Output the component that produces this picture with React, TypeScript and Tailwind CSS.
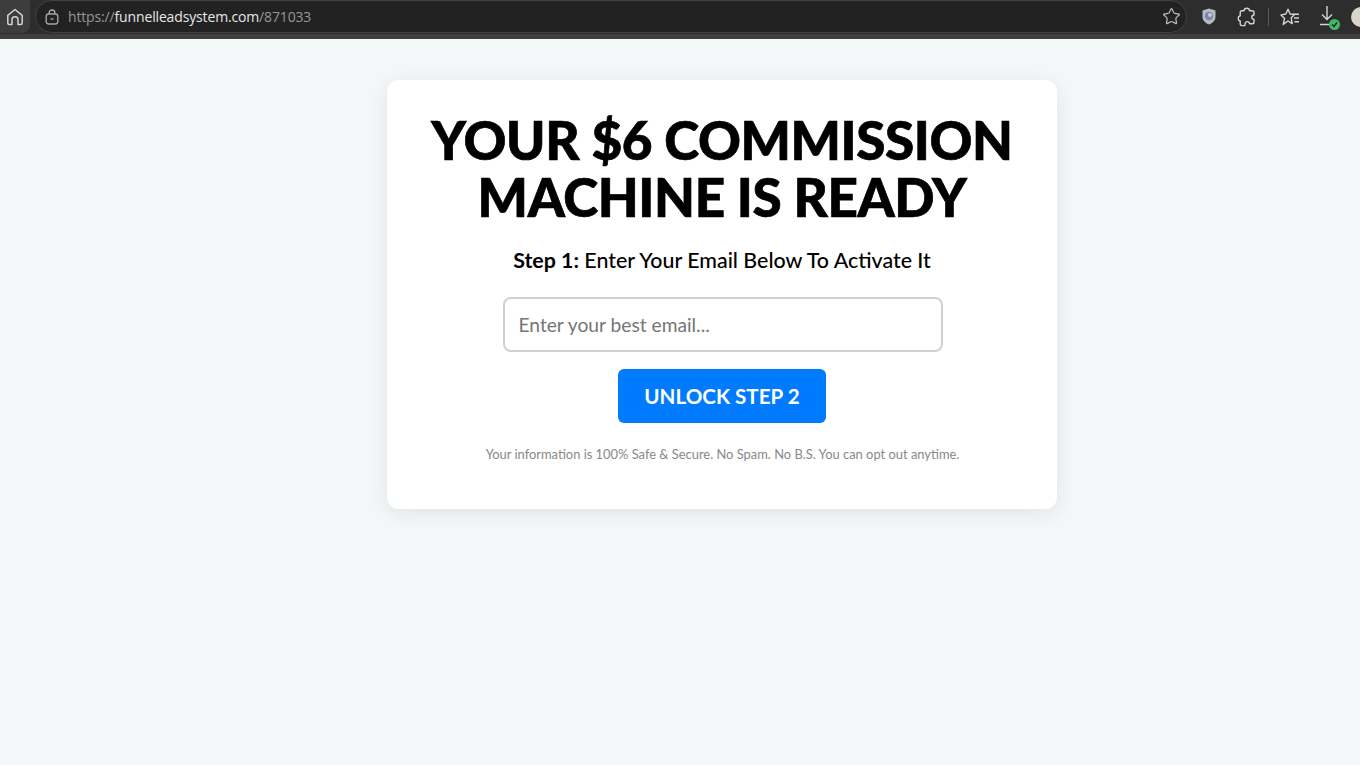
import React from "react";
import { Star } from "lucide-react";

const font = { fontFamily: "Lato, sans-serif" };

function HomeIcon() {
  return (
    <svg width="18" height="18" viewBox="0 0 18 18" fill="none" stroke="#d2d2d2" strokeWidth="1.5" strokeLinejoin="round">
      <path d="M9 1.5 L16.2 7.4 V15 Q16.2 16.5 14.8 16.5 H12 V11.5 Q12 8.8 9 8.8 Q6 8.8 6 11.5 V16.5 H3.2 Q1.8 16.5 1.8 15 V7.4 Z" />
    </svg>
  );
}

function LockIcon() {
  return (
    <svg width="14" height="16" viewBox="0 0 14 16" fill="none" stroke="#a4a4a4" strokeWidth="1.4">
      <rect x="1.2" y="5" width="11.6" height="10" rx="2.4" />
      <path d="M4.2 5 V3.6 Q4.2 1 7 1 Q9.8 1 9.8 3.6 V5" />
      <path d="M5.5 10 H8.5" />
    </svg>
  );
}

function ExtensionIcon() {
  return (
    <svg width="20" height="20" viewBox="0 0 20 20" fill="none" stroke="#d4d4d4" strokeWidth="1.4" strokeLinejoin="round">
      <path d="M7 3.8 Q7.2 1.2 9.8 1.2 Q12.4 1.2 12.6 3.8 H15.2 Q17 3.8 17 5.6 V8 Q14.8 8.2 14.8 10.2 Q14.8 12.2 17 12.4 V15 Q17 16.8 15.2 16.8 H12.6 Q12.4 14.6 10.2 14.6 Q8 14.6 7.8 18.6 H5 Q3.2 18.6 3.2 16.8 V14 Q1.2 13.6 1.2 11.4 Q1.2 9.2 3.2 8.8 V5.6 Q3.2 3.8 5 3.8 Z" />
    </svg>
  );
}

function FavoritesIcon() {
  return (
    <svg width="20" height="18" viewBox="0 0 20 18" fill="none" stroke="#d4d4d4" strokeWidth="1.4" strokeLinejoin="round">
      <path d="M8 1.2 L10.1 6 L14.6 6.5 L11.2 9.8 L12.2 15.6 L8 13 L3.2 16.4 L4.6 10.4 L1 6.9 L5.8 6 Z" />
      <path d="M13.4 6.2 H19 M14 10 H19 M14.4 13.8 H19" />
    </svg>
  );
}

function BrowserBar() {
  return (
    <div className="flex h-[39px] w-full items-start overflow-hidden border-b-[5px] border-b-[#3f3f3f] bg-[#2d2d2d] font-['Open_Sans',sans-serif]">
      <div className="flex h-[33px] w-[30px] shrink-0 items-center justify-center rounded-br-lg bg-[#3d3d3d]">
        <HomeIcon />
      </div>
      <div className="ml-[5px] flex h-[33px] w-[1152px] shrink-0 items-center rounded-full border border-[#424242] bg-[#222222] pl-[9px] pr-[5px]">
        <LockIcon />
        <span className="ml-[9px] text-[14px] tracking-[-0.15px] text-[#969696]">
          https://<span className="text-[#e6e6e6]">funnelleadsystem.com</span>/871033
        </span>
        <Star className="ml-auto size-[19px] text-[#bdbdbd]" strokeWidth={1.5} />
      </div>
      <div className="flex h-[33px] shrink-0 items-center">
        <svg width="14" height="17" viewBox="0 0 14 17" className="ml-[15px]">
          <path d="M7 0.5 L13.5 2.5 V9 C13.5 12.5 10.5 15 7 16.5 C3.5 15 0.5 12.5 0.5 9 V2.5 Z" fill="#b4bac9" />
          <circle cx="7" cy="8" r="4.2" fill="#7b88a3" />
          <circle cx="8" cy="7" r="2" fill="#c6ccd8" />
        </svg>
        <div className="ml-[21px]">
          <ExtensionIcon />
        </div>
        <div className="ml-[11px] h-[18px] w-px bg-[#5a5a5a]" />
        <div className="ml-[11px]">
          <FavoritesIcon />
        </div>
        <div className="relative ml-[18px] h-[24px] w-[20px]">
          <svg width="18" height="22" viewBox="0 0 18 22" fill="none" stroke="#d4d4d4" strokeWidth="1.4">
            <path d="M9 1 V14 M4 9.5 L9 14.5 L14 9.5 M2 19.5 H13" />
          </svg>
          <div className="absolute bottom-[-1px] right-[-2px] flex size-[11px] items-center justify-center rounded-full bg-[#3fb868]">
            <svg width="7" height="7" viewBox="0 0 7 7" fill="none" stroke="#1d1d1d" strokeWidth="1.3">
              <path d="M1 3.5 L3 5.5 L6 1.5" />
            </svg>
          </div>
        </div>
        <div className="ml-[13px] size-[20px] shrink-0 rounded-full bg-[#d9d4ce]" />
      </div>
    </div>
  );
}

export default function App() {
  return (
    <div className="h-[765px] w-full overflow-hidden bg-[#f4f7f8]" style={font}>
      <BrowserBar />
      <div className="flex justify-center pl-[84px] pt-[41px]">
        <div className="flex h-[429px] w-[670px] shrink-0 flex-col items-center rounded-[12px] bg-white pt-[31px] shadow-[0_4px_20px_rgba(0,0,0,0.08)]">
          <h1 className="text-center text-[53px] font-black leading-[57px] tracking-[-0.4px] text-black [-webkit-text-stroke:0.7px_black]">
            YOUR $6 COMMISSION
            <br />
            MACHINE IS READY
          </h1>
          <p className="mt-[20px] text-[21.4px] font-medium leading-[30px] text-black">
            <strong className="font-bold">Step 1:</strong> Enter Your Email Below To Activate It
          </p>
          <input
            className="ml-px mt-[22px] h-[55px] w-[440px] rounded-lg border-2 border-[#d0d0d0] bg-white px-[14px] text-[19.2px] text-black outline-none placeholder:text-[#757575]"
            placeholder="Enter your best email..."
          />
          <button className="mt-[17px] h-[54px] w-[208px] rounded-md bg-[#007bff] text-[20.6px] font-bold text-white">
            UNLOCK STEP 2
          </button>
          <p className="ml-px mt-[21px] text-[12.9px] leading-[20px] text-[#888888]">
            Your information is 100% Safe &amp; Secure. No Spam. No B.S. You can opt out anytime.
          </p>
        </div>
      </div>
    </div>
  );
}
